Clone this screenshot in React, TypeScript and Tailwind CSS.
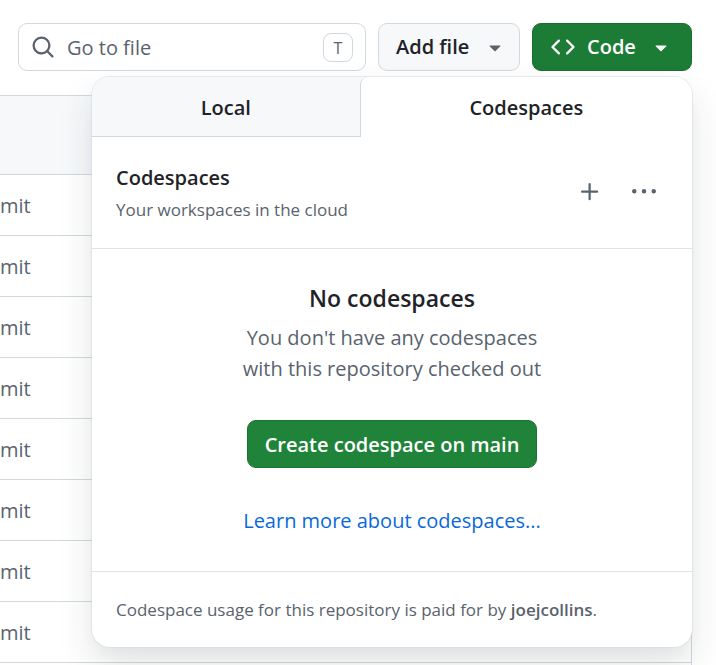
import type { ReactNode } from "react";
import { clsx } from "clsx";

const ICONS = {
  search:
    "M10.68 11.74a6 6 0 0 1-7.922-8.982 6 6 0 0 1 8.982 7.922l3.04 3.04a.749.749 0 0 1-.326 1.275.749.749 0 0 1-.734-.215ZM11.5 7a4.499 4.499 0 1 0-8.997 0A4.499 4.499 0 0 0 11.5 7Z",
  code: "m11.28 3.22 4.25 4.25a.75.75 0 0 1 0 1.06l-4.25 4.25a.749.749 0 0 1-1.275-.326.749.749 0 0 1 .215-.734L13.94 8l-3.72-3.72a.749.749 0 0 1 .326-1.275.749.749 0 0 1 .734.215Zm-6.56 0a.751.751 0 0 1 1.042.018.751.751 0 0 1 .018 1.042L2.06 8l3.72 3.72a.749.749 0 0 1-.326 1.275.749.749 0 0 1-.734-.215L.47 8.53a.75.75 0 0 1 0-1.06Z",
  caret:
    "m4.427 7.427 3.396 3.396a.25.25 0 0 0 .354 0l3.396-3.396A.25.25 0 0 0 11.396 7H4.604a.25.25 0 0 0-.177.427Z",
  plus: "M7.75 2a.75.75 0 0 1 .75.75V7h4.25a.75.75 0 0 1 0 1.5H8.5v4.25a.75.75 0 0 1-1.5 0V8.5H2.75a.75.75 0 0 1 0-1.5H7V2.75A.75.75 0 0 1 7.75 2Z",
  kebab:
    "M8 9a1.5 1.5 0 1 0 0-3 1.5 1.5 0 0 0 0 3ZM1.5 9a1.5 1.5 0 1 0 0-3 1.5 1.5 0 0 0 0 3Zm13 0a1.5 1.5 0 1 0 0-3 1.5 1.5 0 0 0 0 3Z",
};

const commits = ["mit", "mit", "mit", "mit", "mit", "mit", "mit", "mit", ""];

function Icon({ name, className }: { name: keyof typeof ICONS; className?: string }) {
  return (
    <svg viewBox="0 0 16 16" fill="currentColor" aria-hidden="true" className={clsx("size-6 shrink-0", className)}>
      <path d={ICONS[name]} />
    </svg>
  );
}

function IconButton({ label, children }: { label: string; children: ReactNode }) {
  return (
    <button
      type="button"
      aria-label={label}
      className="flex size-12 items-center justify-center rounded-lg text-[#59636e] hover:bg-[#f6f8fa]"
    >
      {children}
    </button>
  );
}

function CodespacesPanel() {
  return (
    <div className="absolute right-0 top-full mt-1.5 w-[600px] overflow-hidden rounded-[18px] bg-white shadow-[0_0_0_1px_#d1d9e080,0_9px_18px_-4px_#25292e0a,0_18px_36px_#25292e1f]">
      <div role="tablist" className="flex h-[60px] bg-[#f6f8fa] text-xl font-semibold">
        <button type="button" role="tab" aria-selected="false" className="flex-auto border-b border-[#d1d9e0] pt-0.5">
          Local
        </button>
        <button
          type="button"
          role="tab"
          aria-selected="true"
          className="flex-auto rounded-tl-lg border-l border-[#d1d9e0] bg-white pt-0.5"
        >
          Codespaces
        </button>
      </div>

      <div className="flex items-center justify-between border-b border-[#dfe3e8] px-6 pb-[23px] pt-[25px]">
        <div>
          <h2 className="text-xl/8 font-semibold">Codespaces</h2>
          <p className="text-[17px]/[31px] text-[#59636e]">Your workspaces in the cloud</p>
        </div>
        <div className="-mt-1 flex gap-1.5">
          <IconButton label="Create a codespace on main">
            <Icon name="plus" />
          </IconButton>
          <IconButton label="Codespace repository configuration">
            <Icon name="kebab" />
          </IconButton>
        </div>
      </div>

      <div className="flex flex-col items-center px-6 pb-[35px] pt-[31px] text-center">
        <h3 className="text-[23px]/9 font-semibold">No codespaces</h3>
        <p className="mt-1.5 w-[320px] text-xl/[31px] text-[#59636e]">
          You don't have any codespaces with this repository checked out
        </p>
        <button
          type="button"
          className="mt-9 h-12 rounded-[9px] border border-[#1a7433] bg-[#1f833a] px-[17px] pt-0.5 text-xl font-semibold text-white"
        >
          Create codespace on main
        </button>
        <a href="#learn" className="mt-[37px] text-xl/[31px] text-[#0969da] hover:underline">
          Learn more about codespaces...
        </a>
      </div>

      <p className="border-t border-[#dfe3e8] px-6 py-[22px] text-[17px]/[31px] text-[#59636e]">
        Codespace usage for this repository is paid for by <strong className="font-semibold">joejcollins</strong>.
      </p>
    </div>
  );
}

export default function App() {
  return (
    <main className="h-screen overflow-hidden bg-white pr-6 pt-[23px] font-['Open_Sans','Noto_Sans',sans-serif] text-[#1f2328]">
      <div className="relative z-10 flex gap-3 pl-[18px]">
        <label className="flex h-12 min-w-0 flex-1 items-center rounded-[9px] border border-[#d1d9e0] bg-white px-3 text-[#59636e]">
          <Icon name="search" />
          <input
            type="text"
            aria-label="Go to file"
            placeholder="Go to file"
            className="ml-3 min-w-0 flex-1 pt-0.5 text-xl outline-none placeholder:text-[#59636e]"
          />
          <kbd className="flex h-[29px] w-[30px] items-center justify-center rounded-lg border border-[#d1d9e0] pt-0.5 font-['Open_Sans','Noto_Sans',sans-serif] text-base">
            T
          </kbd>
        </label>
        <button
          type="button"
          className="flex h-12 w-[142px] items-center justify-between rounded-[9px] border border-[#d1d9e0] bg-[#f6f8fa] pl-[17px] pr-3 text-xl font-semibold"
        >
          Add file
          <Icon name="caret" className="text-[#59636e]" />
        </button>
        <div className="relative">
          <button
            type="button"
            aria-expanded="true"
            className="flex h-12 w-40 items-center rounded-[9px] border border-[#1a6e31] bg-[#1c7b35] px-[18px] text-xl font-semibold text-white"
          >
            <Icon name="code" />
            <span className="ml-3 mr-auto">Code</span>
            <Icon name="caret" />
          </button>
          <CodespacesPanel />
        </div>
      </div>

      <table className="mt-6 w-full border-separate border-spacing-0 border-r border-t border-[#d1d9e0] text-xl text-[#59636e]">
        <thead>
          <tr>
            <th aria-label="Last commit message" className="h-[79px] border-b border-[#d1d9e0] bg-[#f6f8fa]" />
          </tr>
        </thead>
        <tbody>
          {commits.map((message, row) => (
            <tr key={row}>
              <td className="h-[61px] border-b border-[#d1d9e0] p-0 pt-0.5">{message}</td>
            </tr>
          ))}
        </tbody>
      </table>
    </main>
  );
}
